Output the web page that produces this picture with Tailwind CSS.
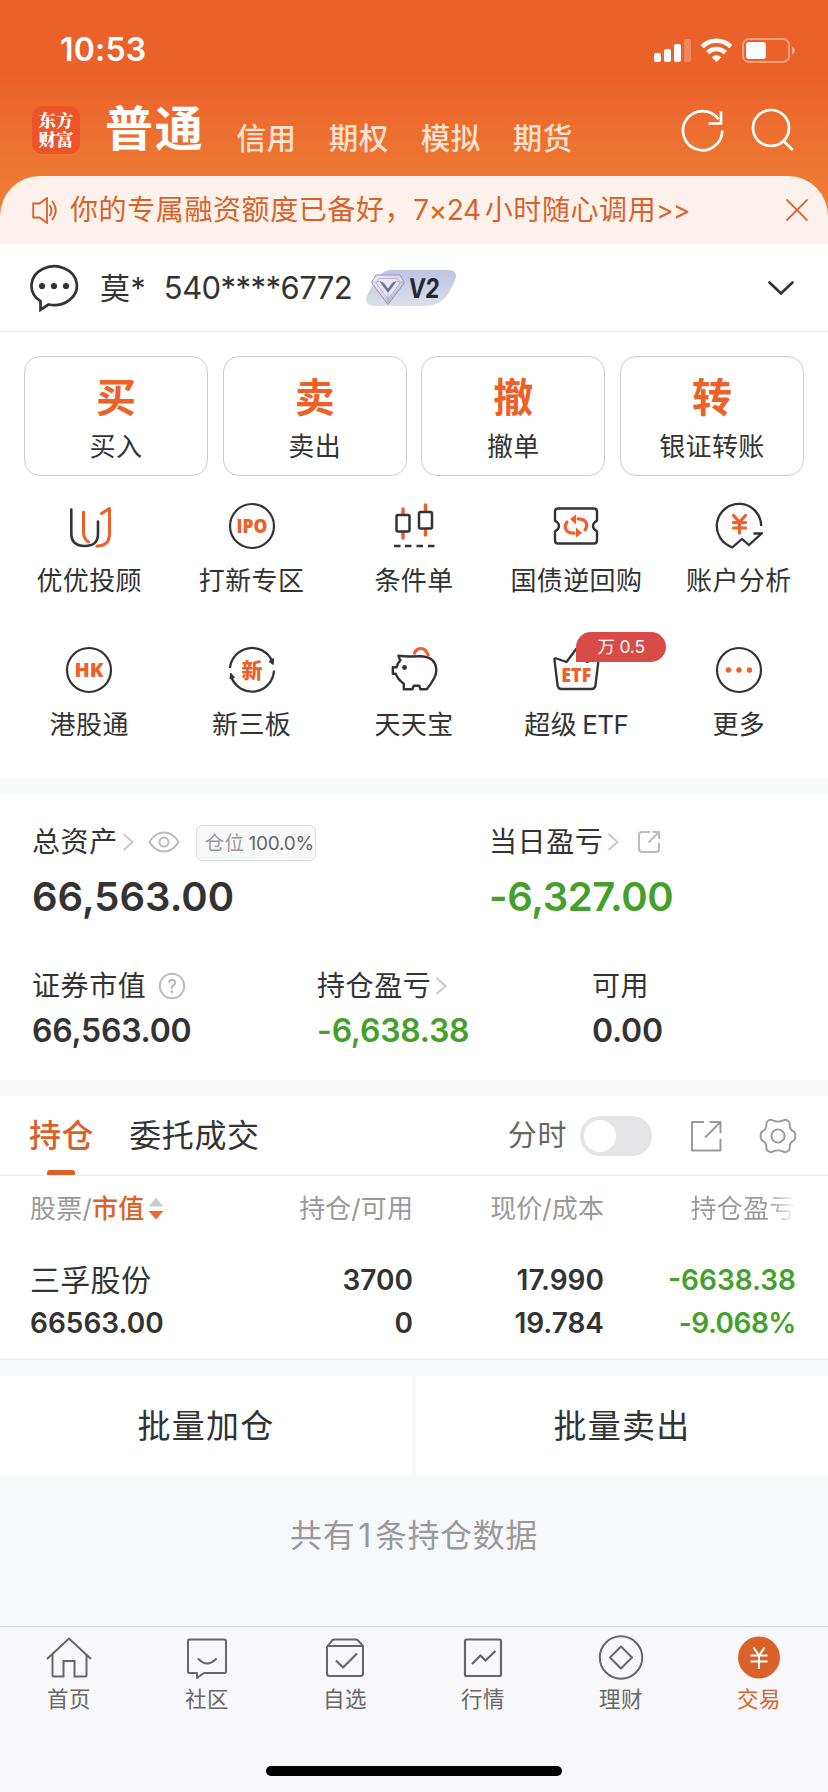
<!DOCTYPE html>
<html lang="zh-CN">
<head>
<meta charset="utf-8">
<title>交易</title>
<script src="https://cdn.jsdelivr.net/npm/@tailwindcss/browser@4"></script>
</head>
<body class="w-[828px] h-[1792px] overflow-hidden bg-[#f7f8fa] text-[#333] font-['Inter','Noto_Sans_CJK_SC',sans-serif] whitespace-nowrap leading-none flex flex-col">

<header class="h-[244px] shrink-0 flex flex-col bg-linear-to-b from-[#eb612a] from-30% to-[#ee7c35] to-80% text-white">
  <div class="h-[88px] pt-3 pl-[60px] pr-[33px] flex items-center">
    <span class="text-[32px] font-semibold tracking-[0.200px]">10:53</span>
    <svg class="ml-auto w-[142px] h-[28px]" viewBox="652 35 142 28" fill="#fff">
      <rect x="653" y="52" width="7" height="9" rx="2"/><rect x="663" y="48" width="7" height="13" rx="2"/><rect x="673" y="43" width="7" height="18" rx="2"/><rect x="683" y="38" width="7" height="23" rx="2" opacity=".25"/>
      <g fill="none" stroke="#fff" stroke-width="4.6"><path d="M701.2 45.6a20.5 20.5 0 0 1 28.6 0"/><path d="M706.6 51.6a12.8 12.8 0 0 1 17.8 0"/></g>
      <path d="M715.5 61l-4.8-4.8a7 7 0 0 1 9.6 0z"/>
      <rect x="742" y="38" width="46" height="23" rx="6" fill="none" stroke="#fff" stroke-width="2" opacity=".4"/>
      <rect x="745" y="41" width="20" height="17" rx="3.5"/><path d="M791 45.5v8q3-1.300 3-4t-3-4z" opacity=".45"/>
    </svg>
  </div>
  <div class="h-[88px] pl-8 pr-[33px] flex">
    <svg class="mt-[18px] w-12 h-12" viewBox="0 0 48 48"><rect width="48" height="48" rx="10" fill="#ed5529"/><g font-family="Noto Serif CJK SC, Noto Sans CJK SC" font-weight="900" font-size="17.500" text-anchor="middle" fill="#fff"><text x="24" y="20.500">东方</text><text x="24" y="40.300">财富</text></g></svg>
    <span class="ml-[25px] mt-[15px] leading-[52px] text-[48px] font-bold tracking-[1.800px]">普通</span>
    <nav class="ml-[32px] mt-[30px] flex gap-[32px] text-[29.500px] leading-10 tracking-[0.500px] text-[#fce2d0] font-medium"><span>信用</span><span>期权</span><span>模拟</span><span>期货</span></nav>
    <svg class="ml-auto mt-[18px] w-[114px] h-12" viewBox="681 106 114 48" fill="none" stroke="#fff" stroke-width="2.700"><path d="M722.200 130.500A19.600 19.600 0 1 1 718.500 119.200"/><path d="M721 111v12.500h-12.500"/><circle cx="771" cy="128" r="18"/><path d="M783.500 141l9.300 9"/></svg>
  </div>
  <div class="h-[68px] rounded-t-[40px] bg-[#fdf1ec] text-[#d9622b] pl-8 pr-5 flex items-center">
    <svg class="w-[27px] h-[27px]" viewBox="0 0 27 27" fill="none" stroke="#d9622b" stroke-width="1.800"><path d="M15 1v25l-7.500-5.500H1.200V6.500h6.300z"/><path d="M17.500 8q4 5.500 0 11M20 4q7.500 9.500 0 19"/></svg>
    <span class="ml-[11px] text-[28px] leading-10 tracking-[0.600px]">你的专属融资额度已备好，<span class="tracking-[-0.400px] mr-[4px]">7×24</span>小时随心调用<span class="text-[26px] tracking-[-0.400px]">&gt;&gt;</span></span>
    <svg class="ml-auto w-[22px] h-[22px]" viewBox="0 0 22 22" stroke="#d9622b" stroke-width="1.800"><path d="M.5.5l21 21M21.500.5l-21 21"/></svg>
  </div>
</header>

<section class="h-[88px] shrink-0 bg-white border-b border-[#ebebeb] pl-[29px] pr-[33px] flex items-center">
  <svg class="w-[50px] h-[50px]" viewBox="29 262 50 50" fill="none" stroke="#333" stroke-width="2.700"><path d="M40.500 300.200A22.700 19.400 0 1 1 48.500 303.500L40.500 308.700z"/><g fill="#333" stroke="none"><circle cx="42" cy="285" r="3.100"/><circle cx="54" cy="285" r="3.100"/><circle cx="66" cy="285" r="3.100"/></g></svg>
  <span class="ml-[21px] text-[30px] leading-10 tracking-[0.400px]">莫*</span>
  <span class="ml-[18px] text-[31px] leading-10 tracking-[-0.550px]">540****6772</span>
  <svg class="ml-[13px] w-[92px] h-[38px]" viewBox="365 269 92 38">
    <defs><linearGradient id="pill" x2="0" y2="1"><stop stop-color="#bcc5df"/><stop offset="1" stop-color="#dcdfea"/></linearGradient><linearGradient id="gem" x2="1" y2="1"><stop stop-color="#f1effa"/><stop offset=".55" stop-color="#d8d5ea"/><stop offset="1" stop-color="#8f8aae"/></linearGradient></defs>
    <path d="M391 270h57q9 0 8 7-1 4-5 12-8 17-26 17h-51q-8 0-8-7 1-5 7-14 8-15 18-15z" fill="url(#pill)"/>
    <path d="M376 275h24l4.500 7.500L388 304.500 371.500 282.500z" fill="url(#gem)" stroke="#9992b4" stroke-width="1"/>
    <path d="M379 278.500h18l3 4.500-12 16-12-16z" fill="#e9e7f5" stroke="#b1abc9" stroke-width=".8"/>
    <path d="M380 281.500l8 11 8-11-3.500 1.500-4.500 6-4.500-6z" fill="#6d6997" stroke="#6d6997" stroke-width=".6"/>
    <path d="M371.500 282.500l8-1M404.500 282.500l-8-1M388 293v11" stroke="#b1abc9" stroke-width=".8"/>
    <text transform="translate(408 298) skewX(-4)" font-family="Inter" font-weight="700" font-size="27" textLength="31" lengthAdjust="spacingAndGlyphs" fill="#242838">V2</text>
  </svg>
  <svg class="ml-auto w-[28px] h-[18px]" viewBox="0 0 28 18" fill="none" stroke="#333" stroke-width="2.700" stroke-linecap="round"><path d="M2.500 3.500L14 14.500 25.500 3.500"/></svg>
</section>

<section class="h-[446px] shrink-0 bg-white pt-6 flex flex-col">
  <div class="px-6 grid grid-cols-4 gap-x-[14.600px] text-center">
    <div class="h-[120px] rounded-2xl border border-[#ccc] pt-[16px]"><div class="text-[40px] leading-[50px] font-bold text-[#ed6028]">买</div><div class="text-[26px] leading-[48px] tracking-[0.400px]">买入</div></div>
    <div class="h-[120px] rounded-2xl border border-[#ccc] pt-[16px]"><div class="text-[40px] leading-[50px] font-bold text-[#ed6028]">卖</div><div class="text-[26px] leading-[48px] tracking-[0.400px]">卖出</div></div>
    <div class="h-[120px] rounded-2xl border border-[#ccc] pt-[16px]"><div class="text-[40px] leading-[50px] font-bold text-[#ed6028]">撤</div><div class="text-[26px] leading-[48px] tracking-[0.400px]">撤单</div></div>
    <div class="h-[120px] rounded-2xl border border-[#ccc] pt-[16px]"><div class="text-[40px] leading-[50px] font-bold text-[#ed6028]">转</div><div class="text-[26px] leading-[48px] tracking-[0.400px]">银证转账</div></div>
  </div>
  <div class="mt-[26px] px-2 grid grid-cols-5 text-center text-[26px] leading-10 tracking-[0.400px]">
    <div class="h-[144px] flex flex-col items-center gap-[11px]">
      <svg class="w-12 h-12" viewBox="0 0 48 48" fill="none" stroke-width="2.600" stroke-linecap="round" stroke-linejoin="round"><g stroke="#333"><path d="M6.300 7.500v24q0 12.500 13.500 12.500T33 31.500V19.500"/></g><g stroke="#ed6028" stroke-width="3"><path d="M18.500 10v20q0 7 5 10M36.500 11.500l8-5v25q0 12.500-12.500 12.500"/></g></svg>
      <span>优优投顾</span></div>
    <div class="h-[144px] flex flex-col items-center gap-[11px]">
      <svg class="w-12 h-12" viewBox="0 0 48 48"><circle cx="24" cy="24" r="22" fill="none" stroke="#333" stroke-width="2.200"/><text x="24" y="31.300" text-anchor="middle" font-family="Open Sans" font-weight="800" font-size="20" textLength="31" lengthAdjust="spacingAndGlyphs" letter-spacing="0" fill="#ed6028">IPO</text></svg>
      <span>打新专区</span></div>
    <div class="h-[144px] flex flex-col items-center gap-[11px]">
      <svg class="w-12 h-12" viewBox="390 502 48 48" fill="none"><g stroke="#ed6028" stroke-width="3.500" stroke-linecap="round"><path d="M403 509v5M403 533v5M425.500 505v6M425.500 530v5"/></g><g stroke="#333" stroke-width="2.500"><rect x="396.500" y="515" width="13" height="16.500" rx="1.500"/><rect x="419" y="512" width="13" height="16.500" rx="1.500"/><path d="M394 546h6.500M405 546h6.500M416.500 546h6.500M428 546h6.500"/></g></svg>
      <span>条件单</span></div>
    <div class="h-[144px] flex flex-col items-center gap-[11px]">
      <svg class="w-12 h-12" viewBox="552 502 48 48" fill="none"><path d="M558 508.500h36q3 0 3 3v9q-4 2.500-4 5.500t4 5.500v9q0 3-3 3h-36q-3 0-3-3v-9q4-2.500 4-5.500t-4-5.500v-9q0-3 3-3z" stroke="#333" stroke-width="2.400"/><g stroke="#ed6028" stroke-width="3.200" stroke-linecap="round"><path d="M567 522q-3.500 5 0 9 2 2.200 7 2.200M585 530q3.500-5 0-9-2-2.200-7-2.200"/></g><path d="M576 527.500l6 5.500-6 4.500zM576 514.500l-6 4.500 6 5.500z" fill="#ed6028"/></svg>
      <span>国债逆回购</span></div>
    <div class="h-[144px] flex flex-col items-center gap-[11px]">
      <svg class="w-12 h-12" viewBox="715 502 48 48" fill="none"><path d="M761.200 526A22.200 22.200 0 1 0 732.500 547.300L742 539l7 6 12.500-11.500h-8" stroke="#333" stroke-width="2.300"/><g stroke="#ed6028" stroke-width="3.200" stroke-linecap="round"><path d="M733.500 515.500l6 6.500 6-6.500M733.500 522.500h12M733.500 528h12M739.500 522v11"/></g></svg>
      <span>账户分析</span></div>
    <div class="h-[144px] flex flex-col items-center gap-[11px]">
      <svg class="w-12 h-12" viewBox="0 0 48 48"><circle cx="24" cy="24" r="22" fill="none" stroke="#333" stroke-width="2.200"/><text x="24" y="31.300" text-anchor="middle" font-family="Open Sans" font-weight="800" font-size="20" textLength="29" lengthAdjust="spacingAndGlyphs" letter-spacing="0" fill="#ed6028">HK</text></svg>
      <span>港股通</span></div>
    <div class="h-[144px] flex flex-col items-center gap-[11px]">
      <svg class="w-12 h-12" viewBox="0 0 48 48"><g fill="none" stroke="#333" stroke-width="2.300"><path d="M2 22A22 22 0 0 1 44 15"/><path d="M46 24.500A22 22 0 0 1 3.500 31.500"/></g><path d="M41 15.500l4.500-3-.3 6zM2 33l.7-6 3.800 4.500z" fill="#333" stroke="#333"/><text x="24" y="31.500" text-anchor="middle" font-family="Noto Sans CJK SC" font-weight="900" font-size="21" letter-spacing="0" fill="#ed6028">新</text></svg>
      <span>新三板</span></div>
    <div class="h-[144px] flex flex-col items-center gap-[11px]">
      <svg class="w-12 h-12" viewBox="390 646 48 48" fill="none" stroke="#333" stroke-width="2.400" stroke-linejoin="round"><path d="M410 656.500q-6.500 0-11.500-.8.500 3 2 4.500-3 3-4 7h-3.700v6.500h3q2 6 8 10v5.500h8.500l1.500-3.500h5.500l1 3.500h6.500q9.500-12 9.500-18.500 0-14.500-17-14.500-3.500 0-9.300.3z"/><circle cx="404.500" cy="667.500" r="2.400" fill="#333" stroke="none"/><path d="M414.500 653q2-4.500 6.500-4.500t7.200 6.500" stroke="#ed6028" stroke-width="3.200" stroke-linecap="round"/></svg>
      <span>天天宝</span></div>
    <div class="h-[144px] flex flex-col items-center gap-[11px] relative">
      <svg class="w-12 h-12" viewBox="552 646 48 48"><path d="M554.500 660q-.3-2.500 2-1.500l10 3.500 10-13.500L587 662l9.800-3.700q2-.5 1.700 2L595.500 685q-.5 4-4 4h-30q-3.500 0-4-4z" fill="none" stroke="#333" stroke-width="2.300" stroke-linejoin="round"/><text x="576.300" y="681.800" text-anchor="middle" font-family="Open Sans" font-weight="800" font-size="20" textLength="30" lengthAdjust="spacingAndGlyphs" letter-spacing="0" fill="#ed6028">ETF</text></svg>
      <span>超级<span class="ml-[5px] tracking-[-0.500px]">ETF</span></span>
      <span class="absolute left-[81px] top-[-14px] w-[90px] h-[30px] rounded-[15px] rounded-bl-none bg-[#d84b47] text-white text-[17.500px] leading-[29px] tracking-[-0.200px]">万 0.5</span></div>
    <div class="h-[144px] flex flex-col items-center gap-[11px]">
      <svg class="w-12 h-12" viewBox="0 0 48 48" fill="#ed6028"><circle cx="24" cy="24" r="22" fill="none" stroke="#333" stroke-width="2.200"/><circle cx="13.500" cy="24" r="2.700"/><circle cx="24" cy="24" r="2.700"/><circle cx="34.500" cy="24" r="2.700"/></svg>
      <span>更多</span></div>
  </div>
</section>

<section class="mt-4 h-[286px] shrink-0 bg-white pl-8 pt-[28px]">
  <div class="flex">
    <div class="w-[457px]">
      <div class="h-10 flex items-center text-[28px] tracking-[0.600px]"><span class="leading-10">总资产</span>
        <svg class="ml-[4px] w-3 h-[18px]" viewBox="0 0 12 18" fill="none" stroke="#ccc" stroke-width="2.200"><path d="M1.500 1L10.500 9 1.500 17"/></svg>
        <svg class="ml-[14px] w-[32px] h-[22px]" viewBox="0 0 32 22" fill="none" stroke="#bbb" stroke-width="2"><path d="M1.500 11Q7 1.500 16 1.500T30.500 11Q25 20.500 16 20.500T1.500 11z"/><circle cx="16" cy="11" r="4.500"/></svg>
        <span class="ml-4 mt-[2px] w-[120px] h-[36px] rounded-md border border-[#ddd] bg-[#f7f8fa] pl-[8px] text-[19.500px] leading-[34px] text-[#666] tracking-[0.300px]"><span class="text-[#999]">仓位</span><span class="ml-[4px] text-[19px] tracking-[-0.200px]">100.0%</span></span></div>
      <div class="mt-[13px] text-[40px] leading-[44px] font-semibold">66,563.00</div>
    </div>
    <div>
      <div class="h-10 flex items-center text-[28px] tracking-[0.600px]"><span class="leading-10">当日盈亏</span>
        <svg class="ml-[4px] w-3 h-[18px]" viewBox="0 0 12 18" fill="none" stroke="#ccc" stroke-width="2.200"><path d="M1.500 1L10.500 9 1.500 17"/></svg>
        <svg class="ml-[18px] w-6 h-6" viewBox="0 0 24 24" fill="none" stroke="#bbb" stroke-width="2"><path d="M13 2H5Q2 2 2 5v14q0 3 3 3h14q3 0 3-3v-6M15.500 2H22v7M22 2L11.500 12.500"/></svg></div>
      <div class="mt-[13px] text-[40px] leading-[44px] font-semibold tracking-[-0.350px] text-[#459f2b]">-6,327.00</div>
    </div>
  </div>
  <div class="mt-[47px] flex">
    <div class="w-[285px]"><div class="h-10 flex items-center text-[28px] tracking-[0.600px]"><span class="leading-10">证券市值</span>
        <svg class="ml-[12px] w-[28px] h-[28px]" viewBox="0 0 28 28"><circle cx="14" cy="14" r="12.200" fill="none" stroke="#bbb" stroke-width="2"/><text x="14" y="20.500" text-anchor="middle" font-family="Inter" font-size="18" letter-spacing="0" fill="#aaa">?</text></svg></div>
      <div class="mt-[5px] text-[32px] leading-10 font-semibold tracking-[-0.250px]">66,563.00</div></div>
    <div class="w-[275px]"><div class="h-10 flex items-center text-[28px] tracking-[0.600px]"><span class="leading-10">持仓盈亏</span>
        <svg class="ml-[4px] w-3 h-[18px]" viewBox="0 0 12 18" fill="none" stroke="#ccc" stroke-width="2.200"><path d="M1.500 1L10.500 9 1.500 17"/></svg></div>
      <div class="mt-[5px] text-[32px] leading-10 font-semibold tracking-[-0.250px] text-[#459f2b]">-6,638.38</div></div>
    <div><div class="h-10 leading-10 text-[28px] tracking-[0.600px]">可用</div>
      <div class="mt-[5px] text-[32px] leading-10 font-semibold tracking-[-0.250px]">0.00</div></div>
  </div>
</section>

<section class="mt-4 h-[264px] shrink-0 bg-white border-b border-[#ebebeb]">
  <div class="h-[80px] border-b border-[#ebebeb] pl-[29px] pr-[31px] flex items-center">
    <div class="h-full relative text-[32px] leading-[79px] tracking-[0.600px] font-medium text-[#d9622b]">持仓<span class="absolute left-[18px] bottom-0 w-7 h-[5px] rounded-t-[3px] bg-[#d9622b]"></span></div>
    <span class="ml-[35px] text-[32px] leading-[79px] tracking-[0.600px]">委托成交</span>
    <span class="ml-auto text-[29px] leading-[79px] tracking-[0.600px] text-[#666]">分时</span>
    <span class="ml-[13px] w-[72px] h-10 rounded-full bg-[#e5e5e7] p-1"><span class="block w-8 h-8 rounded-full bg-white"></span></span>
    <svg class="ml-[38px] w-8 h-8" viewBox="0 0 32 32" fill="none" stroke="#999" stroke-width="2"><path d="M14 2H2v28.500h28.500V19M19.500 2h11v11M30.500 2L15 17.500" stroke-linejoin="round"/></svg>
    <svg class="ml-[37px] w-[38px] h-[38px]" viewBox="-19.5 -19.5 39 39" fill="none" stroke="#999" stroke-width="2" stroke-linejoin="round"><path d="M-11 -15Q-8 -17.500 -5.500 -16Q0 -13.500 5.500 -16Q8 -17.500 11 -15Q12 -14 12 -11Q12 -7 15.500 -5Q18 -4 17.800 0Q18 4 15.500 5Q12 7 12 11Q12 14 11 15Q8 17.500 5.500 16Q0 13.500 -5.500 16Q-8 17.500 -11 15Q-12 14 -12 11Q-12 7 -15.500 5Q-18 4 -17.800 0Q-18 -4 -15.500 -5Q-12 -7 -12 -11Q-12 -14 -11 -15z"/><circle r="6.800"/></svg>
  </div>
  <div class="pl-[30px] pr-8 grid grid-cols-[192px_191px_191px_192px] text-right">
    <div class="h-[66px] flex items-center text-[26px] tracking-[0.200px] text-[#999]"><span>股票/<span class="text-[#d9622b] font-medium">市值</span></span><svg class="ml-1 w-4 h-[22px]" viewBox="0 0 16 22"><path d="M8 0l7.500 8.500H.5z" fill="#ccc"/><path d="M8 21.500L.5 13h15z" fill="#ed6a30"/></svg></div>
    <div class="leading-[65px] text-[26px] tracking-[0.100px] text-[#999]">持仓/可用</div>
    <div class="leading-[65px] text-[26px] tracking-[0.100px] text-[#999]">现价/成本</div>
    <div class="leading-[65px] text-[26px] tracking-[0.400px] text-transparent bg-clip-text bg-linear-to-r from-[#999] from-85% to-white">持仓盈亏</div>
  </div>
  <div class="mt-[17px] pl-[30px] pr-8 grid grid-cols-[192px_191px_191px_192px] text-right text-[28px] leading-[43px] font-semibold">
    <div class="text-left text-[30px] font-normal tracking-[0.300px]">三孚股份</div><div>3700</div><div>17.990</div><div class="text-[#459f2b]">-6638.38</div>
    <div class="text-left">66563.00</div><div>0</div><div>19.784</div><div class="text-[#459f2b] tracking-[-0.500px]">-9.068%</div>
  </div>
</section>

<section class="mt-4 h-[99px] shrink-0 grid grid-cols-2 gap-[4px] text-[33px] leading-[100px] tracking-[1.300px] text-center">
  <div class="bg-white h-[99px]">批量加仓</div><div class="bg-white h-[99px]">批量卖出</div>
</section>
<p class="mt-[41px] h-10 shrink-0 text-center text-[32px] leading-10 tracking-[0.600px] text-[#999]">共有<span class="mx-[3px]">1</span>条持仓数据</p>

<nav class="mt-auto h-[166px] shrink-0 bg-[#f8f8fb] border-t border-[#d5d6da] flex flex-col items-center">
  <div class="w-full pt-[6px] grid grid-cols-6 text-center text-[21.500px] leading-[30px] tracking-[0.600px] text-[#666]">
    <div class="flex flex-col items-center gap-[3px]"><svg class="w-12 h-12" viewBox="0 0 48 48" fill="none" stroke="#666" stroke-width="2"><path d="M2 26L24 5.500 46 26"/><path d="M7.500 21.500V42q0 1.500 1.500 1.500h9.500V28h11v15.500H40q1.500 0 1.500-1.500V21.500"/></svg><span>首页</span></div>
    <div class="flex flex-col items-center gap-[3px]"><svg class="w-12 h-12" viewBox="0 0 48 48" fill="none" stroke="#666" stroke-width="2"><path d="M6.500 6.500h35q1.500 0 1.500 1.500v30.500q0 1.500-1.500 1.500H21l-7 5v-5H6.500Q5 40 5 38.500V8q0-1.500 1.500-1.500z" stroke-linejoin="round"/><path d="M15.500 26q8.500 9 17.500 0" stroke-linecap="round"/></svg><span>社区</span></div>
    <div class="flex flex-col items-center gap-[3px]"><svg class="w-12 h-12" viewBox="0 0 48 48" fill="none" stroke="#666" stroke-width="2"><path d="M6 14v26.500q0 2.500 2.500 2.500h31q2.500 0 2.500-2.500V13L37 7.500Q36.500 6.500 35 6.500H13q-1.500 0-2 1zM6 13h36"/><path d="M15 27.500l7 7 14-14" stroke-width="2.200"/></svg><span>自选</span></div>
    <div class="flex flex-col items-center gap-[3px]"><svg class="w-12 h-12" viewBox="0 0 48 48" fill="none" stroke="#666" stroke-width="2.200"><rect x="6" y="6.500" width="36" height="36.500" rx="1.500"/><path d="M13 31l8.500-8.500 5 5L36.500 18"/></svg><span>行情</span></div>
    <div class="flex flex-col items-center gap-[3px]"><svg class="w-12 h-12" viewBox="0 0 48 48" fill="none" stroke="#666" stroke-width="2"><circle cx="24" cy="24.500" r="21.200"/><path d="M24 13.500l11 11-11 11-11-11z" stroke-linejoin="round"/></svg><span>理财</span></div>
    <div class="flex flex-col items-center gap-[3px] text-[#d9622b]"><svg class="w-12 h-12" viewBox="0 0 48 48" fill="none" stroke="#fff" stroke-width="2"><circle cx="24" cy="24.500" r="21" fill="#d9622b" stroke="none"/><path d="M18.500 14.500L24 22.500l5.500-8M15.500 22.500h17M15.500 28.500h17M24 22.500V36"/></svg><span>交易</span></div>
  </div>
  <div class="mt-auto mb-4 w-[296px] h-[10px] rounded-full bg-black"></div>
</nav>
</body>
</html>
